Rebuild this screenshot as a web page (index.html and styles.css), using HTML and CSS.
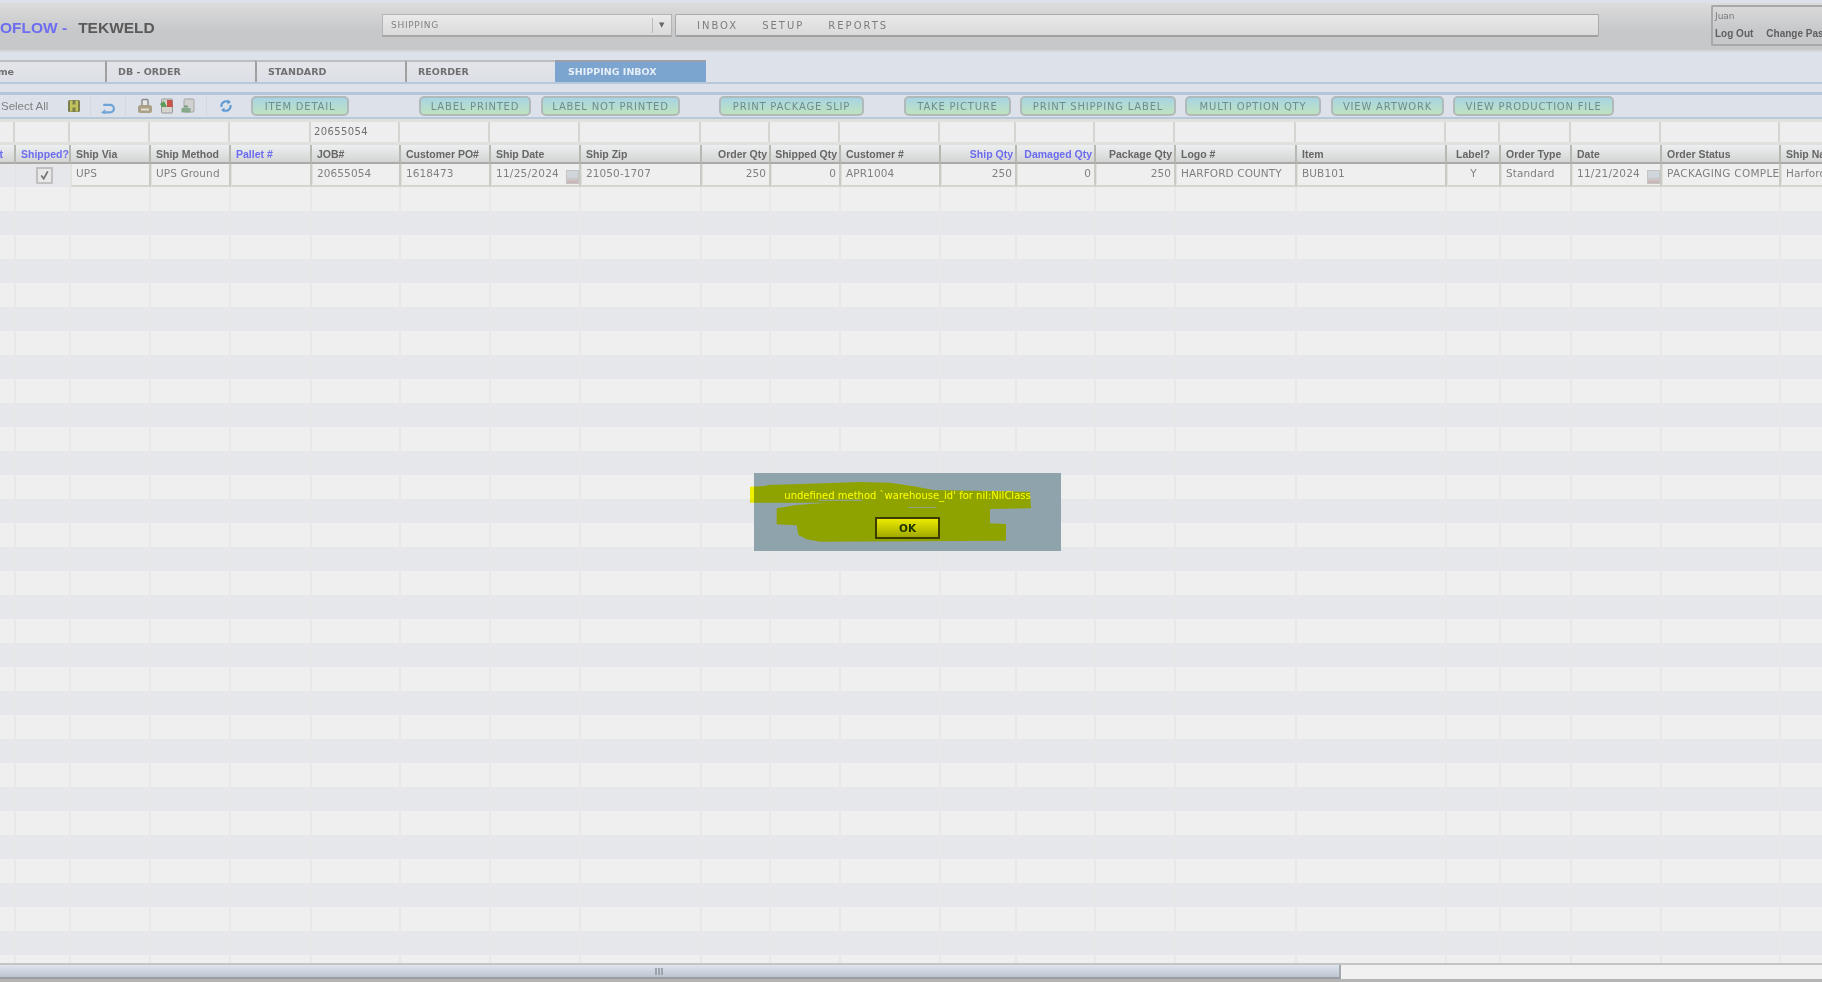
FILE: index.html
```html
<!DOCTYPE html>
<html lang="en">
<head>
<meta charset="utf-8">
<title>Shipping Inbox</title>
<link rel="stylesheet" href="styles.css">
</head>
<body>
<div class="stage">
<div class="app">
  <header class="topbar">
    <div class="brand"><span class="brand-flow">OFLOW -</span><span class="brand-name">TEKWELD</span></div>
    <div class="select"><span class="select-text">SHIPPING</span><span class="select-arrow">▼</span></div>
    <nav class="menu"><span class="menu-item">INBOX</span><span class="menu-item">SETUP</span><span class="menu-item">REPORTS</span></nav>
    <div class="user">
      <div class="user-name">Juan</div>
      <div class="user-links"><span>Log Out</span><span>Change Password</span></div>
    </div>
  </header>

  <div class="tabs">
    <div class="tab tab-home"><span>Home</span></div>
    <div class="tab">DB - ORDER</div>
    <div class="tab">STANDARD</div>
    <div class="tab">REORDER</div>
    <div class="tab tab-active">SHIPPING INBOX</div>
  </div>

  <div class="toolbar">
    <span class="select-all">Select All</span>
    <svg class="ico ico-save" viewBox="0 0 14 14"><rect x="1" y="1" width="12" height="12" rx="1.5" fill="#7d7d50"/><rect x="3" y="1.500" width="2.500" height="11" fill="#c2c25c"/><rect x="8.500" y="1.500" width="2.500" height="11" fill="#c2c25c"/><rect x="5" y="5.500" width="4" height="3" fill="#c2c25c"/></svg>
    <span class="sep sep-a"></span>
    <svg class="ico ico-undo" viewBox="0 0 14 14"><path d="M5 12.500H9.500a3.500 3.500 0 0 0 0-7H3" fill="none" stroke="#6ea3d8" stroke-width="2"/><path d="M5 9.500L1 12.500 5 14.500z" fill="#6ea3d8"/></svg>
    <span class="sep sep-b"></span>
    <svg class="ico ico-print" viewBox="0 0 16 16"><path d="M5 7V2.500a1 1 0 0 1 1-1h4a1 1 0 0 1 1 1V7" fill="#e8e8e8" stroke="#888" stroke-width="1.400"/><rect x="1" y="7" width="14" height="8" rx="2.500" fill="#ab9f88"/><rect x="4" y="10.500" width="8" height="2" fill="#e4ddcc"/></svg>
    <svg class="ico ico-pdf" viewBox="0 0 16 16"><rect x="2.500" y="1" width="11" height="14" rx="1" fill="#d4d4cc" stroke="#999"/><path d="M8 2h5l1 7H8z" fill="#c9544c"/><path d="M1 6l4-3 3 6H3z" fill="#5b9a58"/></svg>
    <svg class="ico ico-xls" viewBox="0 0 16 16"><rect x="4" y="1" width="10" height="13" rx="1" fill="#cfd2cf" stroke="#a5a5a5"/><path d="M1.500 10h9v4.500h-9z" fill="#86a98b"/><path d="M4 8.500h4" stroke="#7a9c80" stroke-width="2"/></svg>
    <span class="sep sep-c"></span>
    <svg class="ico ico-refresh" viewBox="0 0 14 14"><path d="M2.500 8A4.800 4.800 0 0 1 9.500 2.800" fill="none" stroke="#5f9ad4" stroke-width="2"/><path d="M11.500 6A4.800 4.800 0 0 1 4.500 11.200" fill="none" stroke="#5f9ad4" stroke-width="2"/><path d="M8.500.500L12 3 8.500 5.500z" fill="#5f9ad4"/><path d="M5.500 8.500L2 11l3.500 2.500z" fill="#5f9ad4"/></svg>
    <button class="btn btn-item">ITEM DETAIL</button>
    <button class="btn btn-printed">LABEL PRINTED</button>
    <button class="btn btn-notprinted">LABEL NOT PRINTED</button>
    <button class="btn btn-slip">PRINT PACKAGE SLIP</button>
    <button class="btn btn-picture">TAKE PICTURE</button>
    <button class="btn btn-label">PRINT SHIPPING LABEL</button>
    <button class="btn btn-multi">MULTI OPTION QTY</button>
    <button class="btn btn-artwork">VIEW ARTWORK</button>
    <button class="btn btn-file">VIEW PRODUCTION FILE</button>
  </div>

  <div class="grid-row filter-row">
    <div></div><div></div><div></div><div></div><div></div><div>20655054</div><div></div><div></div><div></div><div></div><div></div><div></div><div></div><div></div><div></div><div></div><div></div><div></div><div></div><div></div><div></div><div></div>
  </div>

  <div class="grid-row head-row">
    <div class="th th-clip link"><span>Print</span></div>
    <div class="th link">Shipped?</div>
    <div class="th">Ship Via</div>
    <div class="th">Ship Method</div>
    <div class="th link">Pallet #</div>
    <div class="th">JOB#</div>
    <div class="th">Customer PO#</div>
    <div class="th">Ship Date</div>
    <div class="th">Ship Zip</div>
    <div class="th num">Order Qty</div>
    <div class="th num">Shipped Qty</div>
    <div class="th">Customer #</div>
    <div class="th num link">Ship Qty</div>
    <div class="th num link">Damaged Qty</div>
    <div class="th num">Package Qty</div>
    <div class="th">Logo #</div>
    <div class="th">Item</div>
    <div class="th ctr">Label?</div>
    <div class="th">Order Type</div>
    <div class="th">Date</div>
    <div class="th">Order Status</div>
    <div class="th">Ship Name</div>
  </div>

  <div class="grid-row data-row">
    <div class="plain"></div>
    <div class="plain ctr"><span class="check"><svg viewBox="0 0 16 16"><path d="M4 8l3 4 5-9" fill="none" stroke="#707070" stroke-width="2"/></svg></span></div>
    <div class="td">UPS</div>
    <div class="td">UPS Ground</div>
    <div class="td"></div>
    <div class="td">20655054</div>
    <div class="td">1618473</div>
    <div class="td td-date">11/25/2024<span class="cal"></span></div>
    <div class="td">21050-1707</div>
    <div class="td num">250</div>
    <div class="td num">0</div>
    <div class="td">APR1004</div>
    <div class="td num">250</div>
    <div class="td num">0</div>
    <div class="td num">250</div>
    <div class="td">HARFORD COUNTY</div>
    <div class="td">BUB101</div>
    <div class="td ctr">Y</div>
    <div class="td">Standard</div>
    <div class="td td-date">11/21/2024<span class="cal"></span></div>
    <div class="td td-status">PACKAGING COMPLETE</div>
    <div class="td">Harford County</div>
  </div>

  <div class="grid-row empty-rows">
    <div></div><div></div><div></div><div></div><div></div><div></div><div></div><div></div><div></div><div></div><div></div><div></div><div></div><div></div><div></div><div></div><div></div><div></div><div></div><div></div><div></div><div></div>
  </div>

  <div class="scrollbar"><div class="thumb"><span class="grip"></span></div></div>
</div>

<div class="dialog">
  <p class="dialog-msg">undefined method `warehouse_id' for nil:NilClass</p>
  <button class="dialog-ok">OK</button>
  <svg class="scribble" viewBox="0 0 1020 300">
    <path class="scribble-fill" d="M60 80L105 78 115 75 280 70 390 66 480 68 560 80 610 90 900 95 903 145 780 147 780 190 828 192 828 242 270 245 230 238 205 225 200 196 140 193 140 145 200 135 290 128 105 128 60 128zM265 119h130v3h-130zM535 142h85v2h-85z"/>
  </svg>
</div>
</div>
</body>
</html>
```

FILE: styles.css
```css
* { box-sizing: border-box; }
html, body { margin: 0; padding: 0; height: 100%; overflow: hidden; background: #f2f2f2; }
body { font-family: "DejaVu Sans", sans-serif; }

.stage { position: relative; width: 1822px; height: 982px; overflow: hidden; }

.app {
  width: 1822px;
  height: 982px;
  display: flex;
  flex-direction: column;
  overflow: hidden;
  padding-top: 3px;
  background: #dde1ea;
  filter: blur(0.7px);
  color: #6a6a6a;
}

/* top bar */
.topbar {
  height: 49px;
  flex: none;
  display: flex;
  align-items: flex-start;
  background: linear-gradient(#dcdcdc, #c8c9cb 55%, #c6c7c9);
  border-bottom: 2px solid #d4d5d6;
}
.brand {
  width: 382px;
  flex: none;
  padding-top: 16px;
  font: bold 15.500px "Liberation Sans", sans-serif;
  display: flex;
  gap: 11px;
  white-space: nowrap;
}
.brand-flow { color: #6d6df0; }
.brand-name { color: #5a5a5a; }
.select {
  width: 290px;
  height: 23px;
  margin-top: 11px;
  flex: none;
  display: flex;
  justify-content: space-between;
  align-items: center;
  background: linear-gradient(#eaeaea, #dadada);
  border: 1px solid #b4b4b4;
  border-bottom: 2px solid #a8a8a8;
  font-size: 9px;
  letter-spacing: .7px;
  color: #808080;
  padding-left: 8px;
}
.select-arrow {
  width: 19px;
  font-size: 7px;
  text-align: center;
  color: #666;
  border-left: 1px solid #bbb;
  line-height: 15px;
}
.menu {
  width: 924px;
  height: 23px;
  margin: 11px 0 0 3px;
  flex: none;
  display: flex;
  align-items: center;
  gap: 24px;
  padding-left: 21px;
  background: linear-gradient(#e8e8e8, #dadada);
  border: 1px solid #aaaaaa;
  border-bottom: 2px solid #a0a0a0;
  border-radius: 2px;
  font-size: 10px;
  letter-spacing: 2px;
  color: #7c7c7c;
}
.user {
  width: 140px;
  height: 41px;
  margin: 2px 0 0 112px;
  flex: none;
  border: 2px solid #a8a8a8;
  border-right: 0;
  border-radius: 2px;
  padding: 4px 2px;
  font-size: 9px;
  white-space: nowrap;
  overflow: hidden;
}
.user-name { color: #787878; }
.user-links { display: flex; gap: 13px; margin-top: 7px; font-weight: bold; font-family: "Liberation Sans", sans-serif; font-size: 10px; color: #606060; }

/* tabs */
.tabs {
  height: 32px;
  flex: none;
  padding-top: 8px;
  display: flex;
  background: #dde1ea;
  border-bottom: 2px solid #b7c8da;
  font: bold 9.500px "DejaVu Sans", sans-serif;
  color: #707070;
}
.tab {
  width: 150px;
  padding: 4px 0 0 11px;
  background: linear-gradient(#e3e5e9, #dcdfe6);
  border-left: 2px solid #a0a0a0;
  border-top: 2px solid #bcbec2;
  white-space: nowrap;
}
.tab-home {
  width: 105px;
  display: flex;
  justify-content: flex-end;
  padding: 4px 91px 0 0;
  border-left: 0;
  overflow: hidden;
}
.tab-active {
  width: 151px;
  background: #7ba4cf;
  color: #e6eef6;
  border-left: 0;
  padding-left: 13px;
  border-top-color: #9a9fa8;
}

/* toolbar */
.toolbar {
  height: 27px;
  flex: none;
  margin-top: 8px;
  display: flex;
  align-items: center;
  background: #dde1ea;
  border-top: 3px solid #b3c6da;
  border-bottom: 2px solid #b9c9da;
  font-size: 10px;
}
.select-all { margin-left: 1px; width: 66px; font: 11.500px "Liberation Sans", sans-serif; color: #808080; }
.ico { flex: none; display: block; }
.ico-save { width: 14px; height: 14px; }
.ico-undo { width: 15px; height: 15px; margin-left: 9px; }
.ico-print { width: 16px; height: 16px; margin-left: 11px; }
.ico-pdf { width: 16px; height: 16px; margin-left: 6px; }
.ico-xls { width: 16px; height: 16px; margin-left: 5px; }
.ico-refresh { width: 14px; height: 14px; margin-left: 12px; }
.sep { width: 1px; height: 20px; background: #d3d7df; margin-left: 9px; flex: none; }
.sep-b { margin-left: 10px; }
.sep-c { margin-left: 10px; }

.btn {
  height: 20px;
  flex: none;
  padding: 0;
  background: linear-gradient(#a7d4e4, #bfe3bf);
  border: 2px solid #b0baba;
  border-radius: 5px;
  font: 10px "DejaVu Sans", sans-serif;
  letter-spacing: .8px;
  color: #708c8c;
  white-space: nowrap;
}
.btn-item { width: 98px; margin-left: 18px; }
.btn-printed { width: 112px; margin-left: 70px; }
.btn-notprinted { width: 139px; margin-left: 10px; }
.btn-slip { width: 145px; margin-left: 39px; }
.btn-picture { width: 107px; margin-left: 40px; }
.btn-label { width: 156px; margin-left: 9px; }
.btn-multi { width: 136px; margin-left: 9px; }
.btn-artwork { width: 113px; margin-left: 10px; }
.btn-file { width: 161px; margin-left: 9px; }

/* grid */
.grid-row {
  display: grid;
  flex: none;
  grid-template-columns: 16px 55px 80px 80px 81px 89px 90px 90px 121px 69px 70px 100px 76px 79px 80px 121px 150px 54px 71px 90px 119px 60px;
  width: 1841px;
}
.filter-row {
  height: 26px;
  margin-left: -1px;
  background: #eeeeee;
  border-top: 3px solid #e0e0dc;
  border-bottom: 3px solid #e0e0dc;
  font-size: 10px;
  letter-spacing: .4px;
  color: #707070;
}
.filter-row > div {
  border-right: 2px solid #d4d4d0;
  padding: 3px 0 0 3px;
  line-height: 14px;
}

.head-row {
  height: 19px;
  background: #eee;
}
.th {
  background: linear-gradient(#eceff0, #d4d4d4);
  border-right: 2px solid #b8b8b3;
  border-bottom: 2px solid #aaaaa6;
  font: bold 10.500px "Liberation Sans", sans-serif;
  color: #666;
  padding: 3px 0 0 5px;
  white-space: nowrap;
  overflow: hidden;
}
.th.num { text-align: right; padding: 3px 2px 0 0; }
.th.ctr { text-align: center; padding-left: 0; }
.th.link { color: #6c6cf0; }
.th-clip { display: flex; justify-content: flex-end; padding: 3px 11px 0 0; }

.data-row { height: 23px; background: #e6e7eb; }
.plain { border-right: 1px solid #e3e3e3; }
.plain.ctr { display: flex; justify-content: center; padding: 3px 0 0 3px; }
.td {
  background: #efefef;
  border-right: 2px solid #cbcbc6;
  border-bottom: 2px solid #d5d5d0;
  border-left: 1px solid #e0e0dc;
  font-size: 10.500px;
  letter-spacing: .1px;
  line-height: 15px;
  padding: 2px 0 0 4px;
  color: #808080;
  white-space: nowrap;
  overflow: hidden;
  position: relative;
}
.td.num { text-align: right; padding: 2px 3px 0 0; }
.td.ctr { text-align: center; padding-left: 0; }
.td-date { letter-spacing: .25px; }
.td-status { letter-spacing: .3px; }
.cal {
  position: absolute;
  right: 0;
  top: 6px;
  width: 13px;
  height: 14px;
  background: linear-gradient(#cfd6dc 45%, #c9b0b0);
  border: 1px solid #c4c4c4;
}
.check {
  display: block;
  width: 17px;
  height: 17px;
  background: #e8e8e8;
  border: 2px solid #c0c0c0;
  border-radius: 1px;
}
.check svg { display: block; width: 13px; height: 13px; }

.empty-rows {
  flex: 1;
  min-height: 0;
  background: repeating-linear-gradient(#efefef 0, #efefef 24px, #e6e7eb 24px, #e6e7eb 48px);
}
.empty-rows > div { border-right: 2px solid #e8e8e8; }

/* scrollbar */
.scrollbar {
  height: 19px;
  flex: none;
  background: #f1f1f1;
  border-top: 2px solid #c4c4c4;
  border-bottom: 3px solid #b4b4b4;
}
.thumb {
  width: 1341px;
  height: 14px;
  display: flex;
  justify-content: center;
  align-items: center;
  padding-right: 22px;
  background: linear-gradient(#dfe5ec, #bbc5d1);
  border-right: 2px solid #a4a8ac;
  border-bottom: 2px solid #9a9da0;
}
.grip { width: 8px; height: 7px; background: repeating-linear-gradient(90deg, #9ea4ab 0, #9ea4ab 2px, transparent 2px, transparent 3px); }

/* dialog */
.dialog {
  position: absolute;
  left: 754px;
  top: 473px;
  width: 307px;
  height: 78px;
  background: #8fa3ad;
  text-align: center;
}
.dialog-msg {
  margin: 16px 0 0;
  font: 10px/13px "DejaVu Sans", sans-serif;
  color: #ffff00;
  white-space: nowrap;
}
.dialog-ok {
  display: block;
  width: 65px;
  height: 22px;
  margin: 15px 0 0 121px;
  padding: 0;
  background: linear-gradient(#eaea00, #a2aa00);
  border: 2px solid #3c3c00;
  font: bold 10.500px "DejaVu Sans", sans-serif;
  color: #1d3300;
}
.scribble {
  position: absolute;
  left: -24px;
  top: -13px;
  width: 340px;
  height: 100px;
  overflow: visible;
  mix-blend-mode: multiply;
}
.scribble-fill { fill: #ffff00; fill-rule: evenodd; }
```
